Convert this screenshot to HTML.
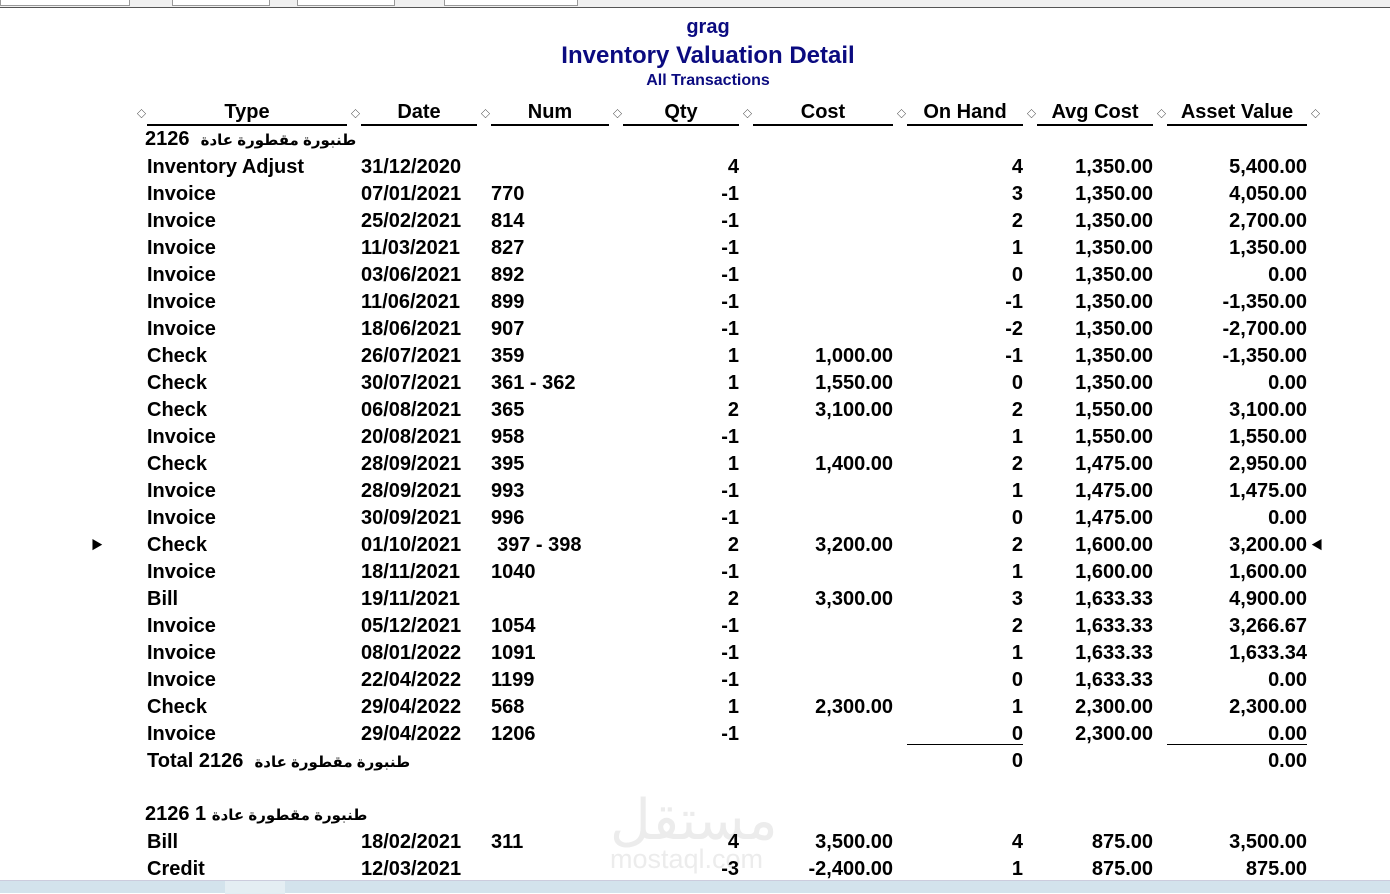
<!DOCTYPE html>
<html><head><meta charset="utf-8"><style>
*{margin:0;padding:0;box-sizing:border-box}
body{width:1390px;height:893px;overflow:hidden;background:#fff;position:relative;font-family:"Liberation Sans","Noto Sans CJK SC",sans-serif;font-weight:bold;color:#000}
.tb{position:absolute;left:0;top:0;width:1390px;height:8px;background:#f0f0f0;border-bottom:1px solid #555}
.inp{position:absolute;top:-2px;height:8px;border:1px solid #999;background:#fff}
.c{position:absolute;text-align:center;color:#0b0b80;width:1390px;left:13px}
.r{position:absolute;left:0;width:1390px;height:27px;line-height:27px;font-size:20px}
.r span{position:absolute;top:0;white-space:nowrap}
.a{left:147px}.b{left:361px}.n{left:491px}
.q{right:651px}.co{right:497px}.o{right:367px}.ac{right:237px}.av{right:83px}
.h span{text-align:center}
.ul{position:absolute;height:2px;background:#000}
.d{position:absolute;font-size:9px;font-weight:normal;top:107px}
.ar{font-family:"Liberation Sans","DejaVu Sans",sans-serif;font-size:15px}
.foot{position:absolute;left:0;top:880px;width:1390px;height:13px;background:#d3e3ec;border-top:1px solid #ccd}
.wm{position:absolute;left:610px;top:796px;color:#ececec;font-size:27px;font-weight:normal}
</style></head><body>
<div class="tb"><div class="inp" style="left:0;width:130px"></div><div class="inp" style="left:172px;width:98px"></div><div class="inp" style="left:297px;width:98px"></div><div class="inp" style="left:444px;width:134px"></div></div>
<div class="wm"><div style="font-size:56px;line-height:48px;margin-left:0">مستقل</div><div>mostaql.com</div></div>
<div class="c" style="top:14px;font-size:20px;line-height:26px">grag</div>
<div class="c" style="top:41px;font-size:24px;line-height:30px">Inventory Valuation Detail</div>
<div class="c" style="top:71px;font-size:16px;line-height:20px">All Transactions</div>
<div class="d" style="left:137px">◇</div><div class="d" style="left:351px">◇</div><div class="d" style="left:481px">◇</div><div class="d" style="left:613px">◇</div><div class="d" style="left:743px">◇</div><div class="d" style="left:897px">◇</div><div class="d" style="left:1027px">◇</div><div class="d" style="left:1157px">◇</div><div class="d" style="left:1311px">◇</div>
<div class="r h" style="top:99px">
<span style="left:147px;width:200px">Type</span><span style="left:361px;width:116px">Date</span><span style="left:491px;width:118px">Num</span><span style="left:623px;width:116px">Qty</span><span style="left:753px;width:140px">Cost</span><span style="left:907px;width:116px">On Hand</span><span style="left:1037px;width:116px">Avg Cost</span><span style="left:1167px;width:140px">Asset Value</span></div>
<div class="ul" style="top:124px;left:147px;width:200px"></div><div class="ul" style="top:124px;left:361px;width:116px"></div><div class="ul" style="top:124px;left:491px;width:118px"></div><div class="ul" style="top:124px;left:623px;width:116px"></div><div class="ul" style="top:124px;left:753px;width:140px"></div><div class="ul" style="top:124px;left:907px;width:116px"></div><div class="ul" style="top:124px;left:1037px;width:116px"></div><div class="ul" style="top:124px;left:1167px;width:140px"></div>
<div class="r" style="top:126px"><span style="left:145px">2126 &nbsp;<span class="ar" style="position:static">طنبورة مقطورة عادة</span></span></div>
<div class="r" style="top:154px"><span class="a">Inventory Adjust</span><span class="b">31/12/2020</span><span class="q">4</span><span class="o">4</span><span class="ac">1,350.00</span><span class="av">5,400.00</span></div>
<div class="r" style="top:181px"><span class="a">Invoice</span><span class="b">07/01/2021</span><span class="n">770</span><span class="q">-1</span><span class="o">3</span><span class="ac">1,350.00</span><span class="av">4,050.00</span></div>
<div class="r" style="top:208px"><span class="a">Invoice</span><span class="b">25/02/2021</span><span class="n">814</span><span class="q">-1</span><span class="o">2</span><span class="ac">1,350.00</span><span class="av">2,700.00</span></div>
<div class="r" style="top:235px"><span class="a">Invoice</span><span class="b">11/03/2021</span><span class="n">827</span><span class="q">-1</span><span class="o">1</span><span class="ac">1,350.00</span><span class="av">1,350.00</span></div>
<div class="r" style="top:262px"><span class="a">Invoice</span><span class="b">03/06/2021</span><span class="n">892</span><span class="q">-1</span><span class="o">0</span><span class="ac">1,350.00</span><span class="av">0.00</span></div>
<div class="r" style="top:289px"><span class="a">Invoice</span><span class="b">11/06/2021</span><span class="n">899</span><span class="q">-1</span><span class="o">-1</span><span class="ac">1,350.00</span><span class="av">-1,350.00</span></div>
<div class="r" style="top:316px"><span class="a">Invoice</span><span class="b">18/06/2021</span><span class="n">907</span><span class="q">-1</span><span class="o">-2</span><span class="ac">1,350.00</span><span class="av">-2,700.00</span></div>
<div class="r" style="top:343px"><span class="a">Check</span><span class="b">26/07/2021</span><span class="n">359</span><span class="q">1</span><span class="co">1,000.00</span><span class="o">-1</span><span class="ac">1,350.00</span><span class="av">-1,350.00</span></div>
<div class="r" style="top:370px"><span class="a">Check</span><span class="b">30/07/2021</span><span class="n">361 - 362</span><span class="q">1</span><span class="co">1,550.00</span><span class="o">0</span><span class="ac">1,350.00</span><span class="av">0.00</span></div>
<div class="r" style="top:397px"><span class="a">Check</span><span class="b">06/08/2021</span><span class="n">365</span><span class="q">2</span><span class="co">3,100.00</span><span class="o">2</span><span class="ac">1,550.00</span><span class="av">3,100.00</span></div>
<div class="r" style="top:424px"><span class="a">Invoice</span><span class="b">20/08/2021</span><span class="n">958</span><span class="q">-1</span><span class="o">1</span><span class="ac">1,550.00</span><span class="av">1,550.00</span></div>
<div class="r" style="top:451px"><span class="a">Check</span><span class="b">28/09/2021</span><span class="n">395</span><span class="q">1</span><span class="co">1,400.00</span><span class="o">2</span><span class="ac">1,475.00</span><span class="av">2,950.00</span></div>
<div class="r" style="top:478px"><span class="a">Invoice</span><span class="b">28/09/2021</span><span class="n">993</span><span class="q">-1</span><span class="o">1</span><span class="ac">1,475.00</span><span class="av">1,475.00</span></div>
<div class="r" style="top:505px"><span class="a">Invoice</span><span class="b">30/09/2021</span><span class="n">996</span><span class="q">-1</span><span class="o">0</span><span class="ac">1,475.00</span><span class="av">0.00</span></div>
<div class="r" style="top:532px"><span style="left:91px;font-size:12px">▶</span><span class="a">Check</span><span class="b">01/10/2021</span><span class="n" style="left:497px">397 - 398</span><span class="q">2</span><span class="co">3,200.00</span><span class="o">2</span><span class="ac">1,600.00</span><span class="av">3,200.00</span><span style="left:1311px;font-size:12px">◀</span></div>
<div class="r" style="top:559px"><span class="a">Invoice</span><span class="b">18/11/2021</span><span class="n">1040</span><span class="q">-1</span><span class="o">1</span><span class="ac">1,600.00</span><span class="av">1,600.00</span></div>
<div class="r" style="top:586px"><span class="a">Bill</span><span class="b">19/11/2021</span><span class="q">2</span><span class="co">3,300.00</span><span class="o">3</span><span class="ac">1,633.33</span><span class="av">4,900.00</span></div>
<div class="r" style="top:613px"><span class="a">Invoice</span><span class="b">05/12/2021</span><span class="n">1054</span><span class="q">-1</span><span class="o">2</span><span class="ac">1,633.33</span><span class="av">3,266.67</span></div>
<div class="r" style="top:640px"><span class="a">Invoice</span><span class="b">08/01/2022</span><span class="n">1091</span><span class="q">-1</span><span class="o">1</span><span class="ac">1,633.33</span><span class="av">1,633.34</span></div>
<div class="r" style="top:667px"><span class="a">Invoice</span><span class="b">22/04/2022</span><span class="n">1199</span><span class="q">-1</span><span class="o">0</span><span class="ac">1,633.33</span><span class="av">0.00</span></div>
<div class="r" style="top:694px"><span class="a">Check</span><span class="b">29/04/2022</span><span class="n">568</span><span class="q">1</span><span class="co">2,300.00</span><span class="o">1</span><span class="ac">2,300.00</span><span class="av">2,300.00</span></div>
<div class="r" style="top:721px"><span class="a">Invoice</span><span class="b">29/04/2022</span><span class="n">1206</span><span class="q">-1</span><span class="o">0</span><span class="ac">2,300.00</span><span class="av">0.00</span></div>
<div class="ul" style="top:744px;left:907px;width:116px;height:1px"></div><div class="ul" style="top:744px;left:1167px;width:140px;height:1px"></div>
<div class="r" style="top:748px"><span class="a">Total 2126 &nbsp;<span class="ar" style="position:static">طنبورة مقطورة عادة</span></span><span class="o">0</span><span class="av">0.00</span></div>
<div class="r" style="top:801px"><span style="left:145px">2126 1 <span class="ar" style="position:static">طنبورة مقطورة عادة</span></span></div>
<div class="r" style="top:829px"><span class="a">Bill</span><span class="b">18/02/2021</span><span class="n">311</span><span class="q">4</span><span class="co">3,500.00</span><span class="o">4</span><span class="ac">875.00</span><span class="av">3,500.00</span></div>
<div class="r" style="top:856px"><span class="a">Credit</span><span class="b">12/03/2021</span><span class="q">-3</span><span class="co">-2,400.00</span><span class="o">1</span><span class="ac">875.00</span><span class="av">875.00</span></div>
<div class="foot"><div style="position:absolute;left:225px;top:0;width:60px;height:13px;background:#e4eef3"></div></div>
</body></html>
